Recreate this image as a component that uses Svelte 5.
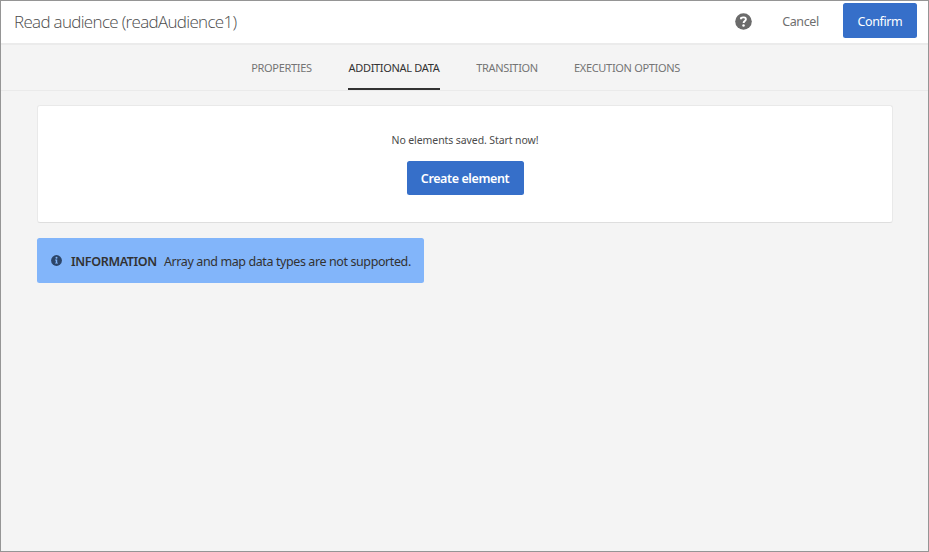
<script>
  const tabs = [
    { label: 'PROPERTIES', width: 61 },
    { label: 'ADDITIONAL DATA', width: 92, active: true },
    { label: 'TRANSITION', width: 62 },
    { label: 'EXECUTION OPTIONS', width: 106 }
  ];
</script>

<div class="window">
  <header>
    <h1>Read audience (readAudience1)</h1>
    <svg class="help" viewBox="0 0 17 17" aria-label="Help">
      <circle cx="8.5" cy="8.5" r="8.3" fill="#6b6b6b" />
      <path d="M6 6.2V5C7.1 4.2 10.9 3.8 10.9 6.2C10.9 8 8.6 8 8.6 10" fill="none" stroke="#fff" stroke-width="1.9" />
      <circle cx="8.5" cy="12.4" r="1.25" fill="#fff" />
    </svg>
    <button class="cancel">Cancel</button>
    <button class="confirm">Confirm</button>
  </header>
  <nav>
    {#each tabs as tab}
      <button class="tab" class:active={tab.active} style:width="{tab.width}px">{tab.label}</button>
    {/each}
  </nav>
  <main>
    <section class="card">
      <p>No elements saved. Start now!</p>
      <button class="create">Create element</button>
    </section>
    <div class="info">
      <svg viewBox="0 0 11 11" aria-hidden="true">
        <circle cx="5.5" cy="5.5" r="5.4" fill="#2c4568" />
        <circle cx="5.5" cy="2.7" r="1" fill="#82b5fa" />
        <path d="M4.1 4.5h2.1v3.2h.8v.9H4.1v-.9h.7V5.4h-.7z" fill="#82b5fa" />
      </svg>
      <strong>INFORMATION</strong>
      <span>Array and map data types are not supported.</span>
    </div>
  </main>
</div>

<style>
  .window {
    box-sizing: border-box;
    width: 929px;
    height: 552px;
    overflow: hidden;
    border: 1px solid #959595;
    background: #f4f4f4;
    color: #4b4b4b;
    font-family: "Noto Sans", "Open Sans", sans-serif;
  }
  button {
    margin: 0;
    padding: 0;
    border: 0;
    background: none;
    font: inherit;
    white-space: nowrap;
  }
  header {
    box-sizing: border-box;
    display: flex;
    height: 44px;
    padding: 0 11px 0 13px;
    border-bottom: 2px solid #ebebeb;
    background: #fff;
  }
  h1 {
    flex: 1;
    margin: 0;
    font-family: "Open Sans", "Noto Sans", sans-serif;
    font-size: 17px;
    font-weight: 300;
    line-height: 41px;
    letter-spacing: -0.68px;
    white-space: nowrap;
  }
  .help {
    width: 17px;
    height: 17px;
    margin: 12px 30px 0 0;
  }
  .cancel {
    width: 37px;
    height: 41px;
    margin-right: 24px;
    color: #6e6e6e;
    font-size: 12.5px;
    letter-spacing: -0.4px;
  }
  .confirm,
  .create {
    border-radius: 2.5px;
    background: #366fc9;
    color: #fff;
  }
  .confirm {
    box-sizing: border-box;
    width: 74px;
    height: 35px;
    margin-top: 2px;
    padding-top: 2px;
    font-size: 12.5px;
    letter-spacing: -0.4px;
  }
  nav {
    box-sizing: border-box;
    display: flex;
    justify-content: center;
    gap: 36px;
    height: 46px;
    padding-left: 2px;
    border-bottom: 1px solid #eaeaea;
  }
  .tab {
    box-sizing: border-box;
    height: 45px;
    padding-top: 1px;
    border-bottom: 2px solid transparent;
    color: #747474;
    font-size: 11px;
    letter-spacing: -0.32px;
  }
  .tab.active {
    border-color: #323232;
    color: #323232;
  }
  main {
    padding: 14px 35px 0 36px;
  }
  .card {
    box-sizing: border-box;
    display: flex;
    flex-direction: column;
    align-items: center;
    height: 118px;
    border: 1px solid #e9e9e9;
    border-bottom-color: #dedede;
    border-radius: 3px;
    background: #fff;
  }
  p {
    margin: 25px 0 0;
    font-size: 10.5px;
    line-height: 18px;
    letter-spacing: -0.09px;
  }
  .create {
    width: 117px;
    height: 34px;
    margin-top: 12px;
    font-size: 12.5px;
    font-weight: 600;
    letter-spacing: -0.4px;
  }
  .info {
    box-sizing: border-box;
    display: flex;
    align-items: center;
    width: 387px;
    height: 45px;
    margin-top: 15px;
    padding: 2px 0 0 14px;
    border-radius: 2.5px;
    background: #82b5fa;
    color: #323232;
    font-size: 12.5px;
    letter-spacing: -0.4px;
    white-space: nowrap;
  }
  .info svg {
    flex: none;
    width: 11px;
    height: 11px;
    margin: -3px 9px 0 0;
  }
  strong {
    flex: none;
    width: 93px;
    font-weight: 600;
    letter-spacing: -0.35px;
  }
</style>
